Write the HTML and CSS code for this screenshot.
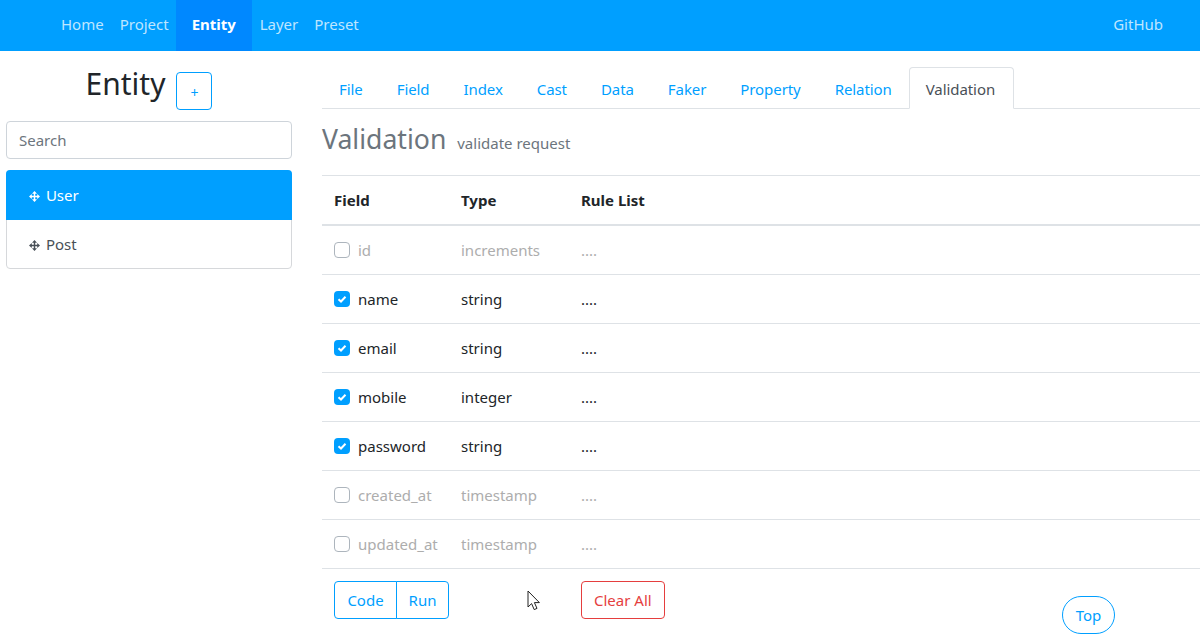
FILE: index.html
```html
<!DOCTYPE html>
<html>
<head>
  <meta charset="utf-8">
  <title>Entity - Validation</title>
  <meta name="viewport" content="width=device-width, initial-scale=1">
  <link rel="stylesheet" href="styles.css">
</head>
<body>
  <!-- Top nav -->
  <nav class="navbar">
    <a href="#">Home</a>
    <a href="#">Project</a>
    <a href="#" class="active">Entity</a>
    <a href="#">Layer</a>
    <a href="#">Preset</a>
    <a href="#" class="github">GitHub</a>
  </nav>

  <div class="main">
    <!-- Entity list -->
    <aside class="sidebar">
      <div class="side-head">
        <h1>Entity</h1>
        <button class="btn btn-add">+</button>
      </div>
      <input class="search" type="text" placeholder="Search">
      <ul class="entity-list">
        <li class="selected">
          <svg class="move" viewBox="0 0 11 11"><path d="M5.5 0 8 2.8H6.2V4.8H8.2V3L11 5.5 8.2 8V6.2H6.2V8.2H8L5.5 11 3 8.2H4.8V6.2H2.8V8L0 5.5 2.8 3V4.8H4.8V2.8H3z"/></svg>
          User
        </li>
        <li>
          <svg class="move" viewBox="0 0 11 11"><path d="M5.5 0 8 2.8H6.2V4.8H8.2V3L11 5.5 8.2 8V6.2H6.2V8.2H8L5.5 11 3 8.2H4.8V6.2H2.8V8L0 5.5 2.8 3V4.8H4.8V2.8H3z"/></svg>
          Post
        </li>
      </ul>
    </aside>

    <section class="content">
      <div class="tabs">
        <a href="#">File</a>
        <a href="#">Field</a>
        <a href="#">Index</a>
        <a href="#">Cast</a>
        <a href="#">Data</a>
        <a href="#">Faker</a>
        <a href="#">Property</a>
        <a href="#">Relation</a>
        <a href="#" class="active">Validation</a>
      </div>

      <h2>Validation <small>validate request</small></h2>

      <table>
        <thead>
          <tr><th class="c1">Field</th><th class="c2">Type</th><th>Rule List</th></tr>
        </thead>
        <tbody>
          <tr class="off">
            <td><span class="check"></span>id</td><td>increments</td><td>....</td>
          </tr>
          <tr>
            <td><span class="check on"><svg viewBox="0 0 16 16"><path d="M4.5 8.2 7 10.5 11.5 5.8"/></svg></span>name</td><td>string</td><td>....</td>
          </tr>
          <tr>
            <td><span class="check on"><svg viewBox="0 0 16 16"><path d="M4.5 8.2 7 10.5 11.5 5.8"/></svg></span>email</td><td>string</td><td>....</td>
          </tr>
          <tr>
            <td><span class="check on"><svg viewBox="0 0 16 16"><path d="M4.5 8.2 7 10.5 11.5 5.8"/></svg></span>mobile</td><td>integer</td><td>....</td>
          </tr>
          <tr>
            <td><span class="check on"><svg viewBox="0 0 16 16"><path d="M4.5 8.2 7 10.5 11.5 5.8"/></svg></span>password</td><td>string</td><td>....</td>
          </tr>
          <tr class="off">
            <td><span class="check"></span>created_at</td><td>timestamp</td><td>....</td>
          </tr>
          <tr class="off">
            <td><span class="check"></span>updated_at</td><td>timestamp</td><td>....</td>
          </tr>
        </tbody>
      </table>

      <div class="actions">
        <div class="btn-group">
          <button class="btn">Code</button>
          <button class="btn">Run</button>
        </div>
        <button class="btn btn-danger">Clear All</button>
      </div>
    </section>
  </div>

  <button class="btn btn-top">Top</button>

  <svg class="cursor" viewBox="0 0 14 21"><path d="M1 1V17L4.6 13.6 7.2 19.6 10 18.4 7.4 12.6H12.4Z"/></svg>
</body>
</html>
```

FILE: styles.css
```css
* { box-sizing: border-box; }
html, body { height: 640px; overflow: hidden; }
body { margin: 0; position: relative; background: white; color: #212529;
       font-family: "Noto Sans", "Open Sans", sans-serif; font-size: 15px; line-height: 24px; }
a { text-decoration: none; }

.navbar { display: flex; height: 51px; padding-left: 53px; background: #009fff; }
.navbar a { padding: 12px 8px; color: rgba(255,255,255,0.75); }
.navbar a.active { width: 76px; padding: 12px 16px; margin-left: -1px; background: #0088ff; color: white; font-weight: bold; }
.navbar a.github { margin-left: auto; padding-right: 37px; }

.main { display: flex; }
.sidebar { width: 286px; margin-left: 6px; flex: none; }
.side-head { display: flex; justify-content: center; padding: 21px 0 11px 0; }
.side-head h1 { margin: 0 11px 0 0; font-size: 30px; font-weight: normal; line-height: 24px; }

.btn { height: 38px; padding: 0 12px; background: white; color: #009fff; font: inherit;
       border: 1px solid #009fff; border-radius: 4px; }
.btn-add { width: 36px; padding: 4px 0 0 0; font-size: 14px; }

.search { display: block; width: 100%; height: 38px; padding: 0 12px; font: inherit; color: #495057;
          border: 1px solid #ced4da; border-radius: 4px; }
.search::placeholder { color: #6c757d; opacity: 1; }

.entity-list { margin: 11px 0 0 0; padding: 0; list-style: none; border: 1px solid #d6d8db; border-radius: 4px; }
.entity-list li { height: 48px; padding: 12px 22px; color: #495057; }
.entity-list li.selected { height: 50px; margin: -1px -1px 0 -1px; padding: 13px 23px; background: #009fff;
                           color: white; border-radius: 4px 4px 0 0; }
.move { width: 11px; height: 11px; margin-right: 2px; fill: currentColor; vertical-align: -1px; }

.content { flex: 1; margin-left: 30px; min-width: 0; }
.tabs { display: flex; height: 42px; margin-top: 16px; border-bottom: 1px solid #dee2e6; letter-spacing: -0.08px; }
.tabs a { height: 42px; padding: 9px 16px; color: #009fff; border: 1px solid transparent; }
.tabs a.active { width: 105px; color: #495057; background: white; border-color: #dee2e6 #dee2e6 white; border-radius: 4px 4px 0 0; }

h2 { margin: 9px 0 0 0; height: 57px; font-size: 26.6px; font-weight: normal; line-height: 42px; color: #6c757d; }
h2 small { margin-left: 4px; font-size: 15px; }

table { width: 100%; border-collapse: collapse; table-layout: fixed; }
th { height: 49px; padding: 1px 12px 0 12px; text-align: left; font-weight: bold; border-top: 1px solid #dee2e6; border-bottom: 2px solid #dee2e6; }
td { height: 49px; padding: 0 12px; white-space: nowrap; border-bottom: 1px solid #dee2e6; }
tbody tr:first-child td { height: 50px; padding-top: 1px; }
.c1 { width: 127px; }
.c2 { width: 120px; }
.off td { color: #adadad; }

.check { display: inline-block; width: 16px; height: 16px; margin-right: 8px; vertical-align: -2px;
         background: white; border: 1px solid #adb5bd; border-radius: 4px; }
.check.on { background: #009fff; border: none; }
.check svg { display: block; fill: none; stroke: white; stroke-width: 2; }

.actions { display: flex; padding: 12px 12px 0 12px; }
.btn-group { display: flex; width: 247px; }
.btn-group .btn:first-child { width: 63px; padding: 0; border-radius: 4px 0 0 4px; }
.btn-group .btn:last-child { width: 53px; padding: 0; margin-left: -1px; border-radius: 0 4px 4px 0; }
.btn-danger { color: #e53e3e; border-color: #e53e3e; }

.btn-top { position: absolute; left: 1062px; top: 596px; width: 53px; padding: 0; border-radius: 19px; }
.cursor { position: absolute; left: 527px; top: 590px; width: 14px; height: 21px; fill: white; stroke: #222; stroke-width: 1; }
```
